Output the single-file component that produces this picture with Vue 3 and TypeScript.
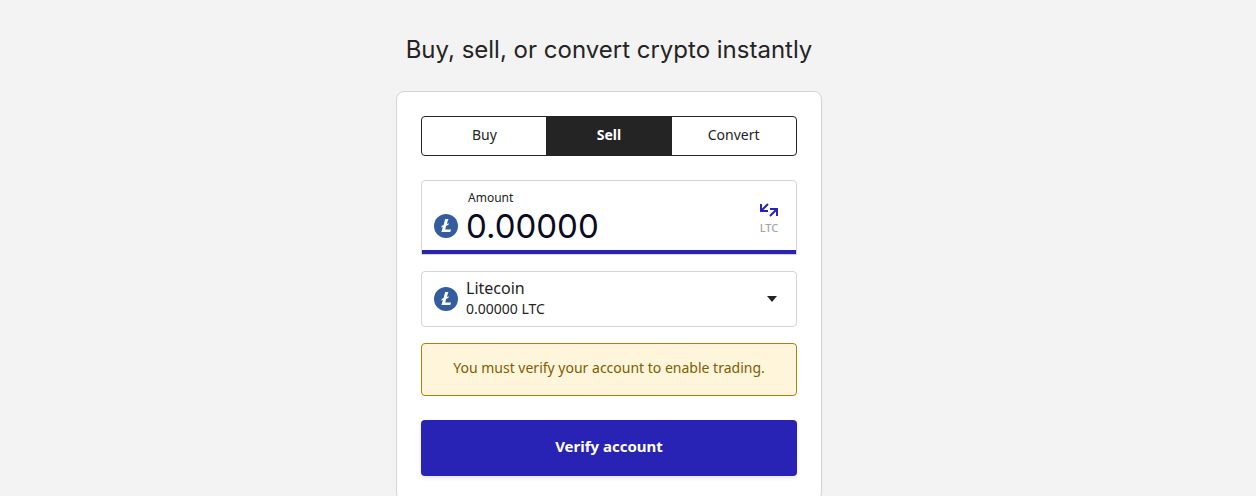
<script setup lang="ts">
import { ref } from 'vue'

const tabs = ['Buy', 'Sell', 'Convert'] as const
const active = ref<(typeof tabs)[number]>('Sell')
const amount = ref('0.00000')
const asset = ref('Litecoin')
</script>

<template>
  <main class="page">
    <h1 class="title">Buy, sell, or convert crypto instantly</h1>
    <section class="card">
      <div class="tabs">
        <button
          v-for="tab in tabs"
          :key="tab"
          type="button"
          class="tab"
          :class="{ active: tab === active }"
          :aria-pressed="tab === active"
          @click="active = tab"
        >{{ tab }}</button>
      </div>

      <div class="amount">
        <svg class="coin amount-coin" viewBox="0 0 24 24" aria-hidden="true">
          <circle cx="12" cy="12" r="12" fill="#345d9d" />
          <path d="M11.2 5h3.2l-1.6 5 2-.8-.5 1.7-2.1.8-1 3.7h5.8l-.7 2.6H7.4l1.5-5.1-1.6.6.5-1.7 1.7-.6z" fill="#fff" />
        </svg>
        <div class="amount-field">
          <label class="amount-label" for="amount">Amount</label>
          <input id="amount" v-model="amount" class="amount-input" type="text" inputmode="decimal" />
        </div>
        <button type="button" class="swap" aria-label="Switch currency, LTC">
          <svg class="swap-icon" viewBox="0 0 18 14" aria-hidden="true">
            <path d="M1 1v7h7M1.5 7.5 8 1M10 6h7v7M16.5 6.5 10 13" fill="none" stroke="#2822b5" stroke-width="2" />
          </svg>
          <span>LTC</span>
        </button>
      </div>

      <div class="asset">
        <select v-model="asset" class="asset-select" aria-label="Asset" aria-describedby="balance">
          <option>Litecoin</option>
        </select>
        <svg class="coin asset-coin" viewBox="0 0 24 24" aria-hidden="true">
          <circle cx="12" cy="12" r="12" fill="#345d9d" />
          <path d="M11.2 5h3.2l-1.6 5 2-.8-.5 1.7-2.1.8-1 3.7h5.8l-.7 2.6H7.4l1.5-5.1-1.6.6.5-1.7 1.7-.6z" fill="#fff" />
        </svg>
        <span id="balance" class="balance">0.00000 LTC</span>
        <svg class="caret" viewBox="0 0 10 6" aria-hidden="true"><path d="M0 0h10L5 6z" fill="#242424" /></svg>
      </div>

      <p class="notice">You must verify your account to enable trading.</p>
      <button type="button" class="verify">Verify account</button>
    </section>
  </main>
</template>

<style>
body {
  background: #f3f3f3;
}
html {
  scrollbar-width: none;
}
</style>

<style scoped>
.page {
  box-sizing: border-box;
  padding: 32px 38px 0 0;
  display: flex;
  flex-direction: column;
  align-items: center;
  font-family: "Noto Sans", "Open Sans", sans-serif;
  font-size: 14px;
  color: #242424;
}
.title {
  margin: 0 0 23px;
  font-family: Inter, sans-serif;
  font-size: 24px;
  font-weight: 400;
  line-height: 36px;
}
.card {
  box-sizing: border-box;
  width: 100%;
  max-width: 426px;
  padding: 24px;
  background: #fff;
  border: 1px solid #d5d5d8;
  border-radius: 8px;
  display: flex;
  flex-direction: column;
}
button, input, select {
  margin: 0;
  padding: 0;
  border: 0;
  background: none;
  font: inherit;
  color: inherit;
}
button {
  cursor: pointer;
}
.tabs {
  display: flex;
  height: 38px;
  border: 1px solid #242424;
  border-radius: 4px;
}
.tab {
  flex: 1;
  padding-bottom: 3px;
}
.tab.active {
  background: #242424;
  box-shadow: 0 0 0 1px #242424;
  color: #fff;
  font-weight: 700;
}
.amount {
  margin-top: 24px;
  padding: 9px 16px 8px 12px;
  display: flex;
  align-items: flex-end;
  gap: 8px;
  border: 1px solid #d5d5d8;
  border-radius: 4px 4px 0 0;
  box-shadow: inset 0 -4px #2822b5;
}
.coin {
  flex: none;
  width: 24px;
  height: 24px;
}
.amount-coin {
  margin-bottom: 8px;
}
.amount-field {
  flex: 1;
  min-width: 0;
  display: flex;
  flex-direction: column;
}
.amount-label {
  padding-left: 2px;
  font-size: 12px;
  line-height: 16px;
}
.amount-input {
  width: 100%;
  height: 40px;
  box-sizing: border-box;
  font-family: Inter, sans-serif;
  font-size: 33px;
  font-weight: 400;
  line-height: 40px;
  color: #0a0a23;
  outline: none;
}
.swap {
  width: 22px;
  margin-bottom: 10px;
  display: flex;
  flex-direction: column;
  align-items: center;
  gap: 3px;
  font-size: 11px;
  font-weight: 500;
  line-height: 16px;
  color: #a5a5a8;
}
.swap-icon {
  width: 18px;
  height: 14px;
}
.asset {
  margin-top: 16px;
  height: 54px;
  display: grid;
  grid-template-columns: 32px 1fr 10px;
  grid-template-rows: 27px 27px;
  padding: 0 19px 0 12px;
  border: 1px solid #d5d5d8;
  border-radius: 4px;
}
.asset > * {
  pointer-events: none;
}
.asset .asset-select {
  grid-area: 1 / 1 / 3 / 4;
  appearance: none;
  padding: 4px 16px 26px 32px;
  font-size: 16px;
  line-height: 24px;
  pointer-events: auto;
}
.asset-coin {
  grid-area: 1 / 1 / 3 / 2;
  align-self: center;
}
.balance {
  grid-area: 2 / 2;
  line-height: 20px;
}
.caret {
  grid-area: 1 / 3 / 3 / 4;
  align-self: center;
  width: 10px;
  height: 6px;
}
.notice {
  margin: 16px 0 0;
  padding: 14px 16px 17px;
  background: #fff5db;
  border: 1px solid #a88400;
  border-radius: 4px;
  color: #7a6000;
  line-height: 20px;
  text-align: center;
}
.verify {
  margin-top: 24px;
  height: 56px;
  padding-bottom: 4px;
  background: #2822b5;
  border-radius: 4px;
  box-shadow: 0 2px 4px rgba(36, 36, 36, 0.12);
  color: #fff;
  font-size: 15px;
  font-weight: 700;
}
</style>
